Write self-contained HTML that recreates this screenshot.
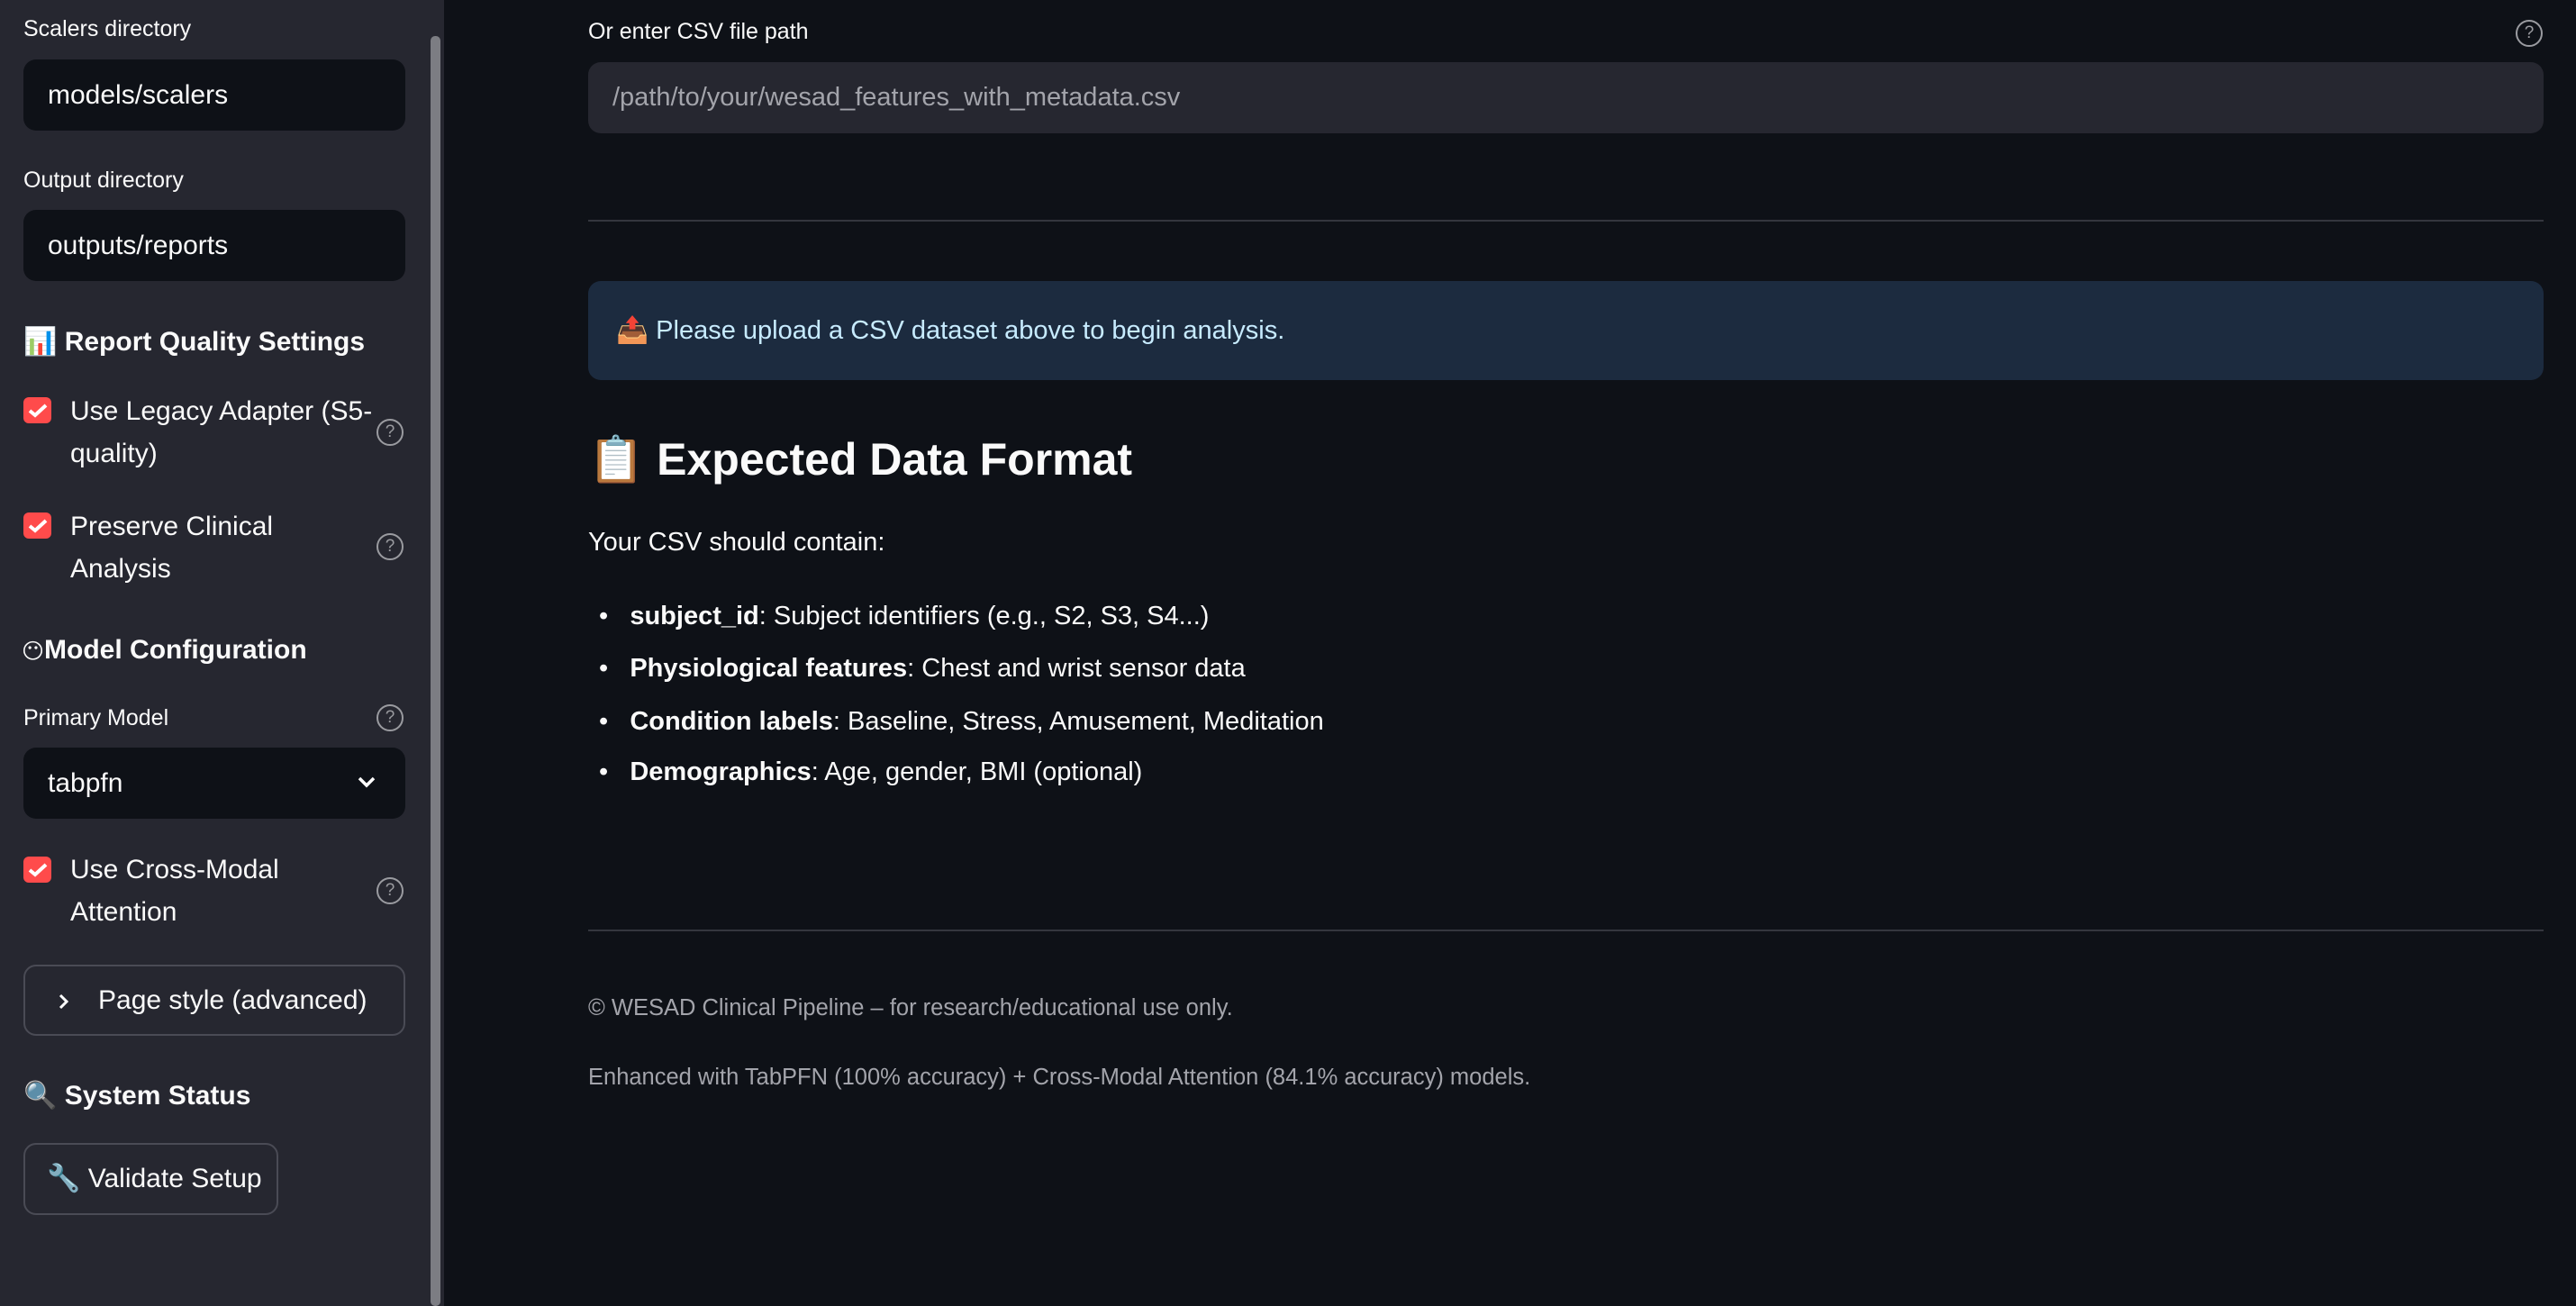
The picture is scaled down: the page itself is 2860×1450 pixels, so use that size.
<!DOCTYPE html>
<html><head><meta charset="utf-8"><style>
*{box-sizing:border-box;margin:0;padding:0}
body{width:2860px;height:1450px;background:#0e1117;font-family:"Liberation Sans","DejaVu Sans",sans-serif;color:#fafafa;position:relative;overflow:hidden}
.a{position:absolute;white-space:nowrap}
#sb{position:absolute;left:0;top:0;width:493px;height:1450px;background:#262730}
.sbar{position:absolute;left:478px;top:40px;width:11px;height:1410px;background:#7c7d83;border-radius:5px}
.lbl{font-size:25px;color:#fafafa}
.inp{position:absolute;left:26px;width:424px;height:79px;background:#0e1117;border-radius:14px;font-size:30px;padding-left:27px;line-height:79px}
.h3{font-size:30px;font-weight:bold}
.cb{position:absolute;left:26px;width:31px;height:29px;background:#ff4b4b;border-radius:6px}
.cb svg{position:absolute;left:5px;top:6px}
.ct{font-size:30px;line-height:47px}
.help{position:absolute;width:30px;height:30px;border:2px solid #9a9ba0;border-radius:50%;color:#9a9ba0;font-size:19px;text-align:center;line-height:26px}
.btn{position:absolute;border:2px solid #4a4b55;border-radius:14px;font-size:30px;line-height:75px}
.mt{font-size:29px}
</style></head><body>
<div id="sb">
<div class="sbar"></div>
<div class="a lbl" style="left:26px;top:18px">Scalers directory</div>
<div class="inp" style="top:66px">models/scalers</div>
<div class="a lbl" style="left:26px;top:186px">Output directory</div>
<div class="inp" style="top:233px">outputs/reports</div>
<div class="a h3" style="left:26px;top:362px">📊 Report Quality Settings</div>
<div class="cb" style="top:441px"><svg width="22" height="17" viewBox="0 0 22 17"><path d="M2 9l6 5L20 3" stroke="#fff" stroke-width="4" fill="none"/></svg></div>
<div class="a ct" style="left:78px;top:433px">Use Legacy Adapter (S5-<br>quality)</div>
<div class="help" style="left:418px;top:465px">?</div>
<div class="cb" style="top:569px"><svg width="22" height="17" viewBox="0 0 22 17"><path d="M2 9l6 5L20 3" stroke="#fff" stroke-width="4" fill="none"/></svg></div>
<div class="a ct" style="left:78px;top:561px">Preserve Clinical<br>Analysis</div>
<div class="help" style="left:418px;top:592px">?</div>
<div class="a h3" style="left:24px;top:705px"><span style="font-size:24px">😶</span>Model Configuration</div>
<div class="a lbl" style="left:26px;top:783px">Primary Model</div>
<div class="help" style="left:418px;top:782px">?</div>
<div class="inp" style="top:830px">tabpfn<svg style="position:absolute;left:370px;top:30px" width="22" height="16" viewBox="0 0 22 16"><path d="M3 4l8 8 8-8" stroke="#fff" stroke-width="3.5" fill="none"/></svg></div>
<div class="cb" style="top:951px"><svg width="22" height="17" viewBox="0 0 22 17"><path d="M2 9l6 5L20 3" stroke="#fff" stroke-width="4" fill="none"/></svg></div>
<div class="a ct" style="left:78px;top:942px">Use Cross-Modal<br>Attention</div>
<div class="help" style="left:418px;top:974px">?</div>
<div class="btn" style="left:26px;top:1071px;width:424px;height:79px"><svg style="position:absolute;left:36px;top:29px" width="14" height="20" viewBox="0 0 14 20"><path d="M3 3l7 7-7 7" stroke="#fff" stroke-width="3" fill="none"/></svg><span style="position:absolute;left:81px">Page style (advanced)</span></div>
<div class="a h3" style="left:26px;top:1199px">🔍 System Status</div>
<div class="btn" style="left:26px;top:1269px;width:283px;height:80px;padding-left:24px">🔧 Validate Setup</div>
</div>

<div class="a" style="left:653px;top:21px;font-size:25px">Or enter CSV file path</div>
<div class="help" style="left:2793px;top:22px">?</div>
<div class="a" style="left:653px;top:69px;width:2171px;height:79px;background:#262730;border-radius:14px;font-size:29px;color:#a3a4ab;padding-left:27px;line-height:79px">/path/to/your/wesad_features_with_metadata.csv</div>
<div class="a" style="left:653px;top:244px;width:2171px;height:2px;background:#34363e"></div>
<div class="a" style="left:653px;top:312px;width:2171px;height:110px;background:#1c2b3f;border-radius:14px;font-size:29px;color:#c7ebff;padding-left:31px;line-height:110px">📤 Please upload a CSV dataset above to begin analysis.</div>
<div class="a" style="left:653px;top:481px;font-size:50px;font-weight:bold">📋 Expected Data Format</div>
<div class="a mt" style="left:653px;top:586px">Your CSV should contain:</div>
<div class="a mt" style="left:665px;top:668px">•&nbsp;&nbsp;&nbsp;<b>subject_id</b>: Subject identifiers (e.g., S2, S3, S4...)</div>
<div class="a mt" style="left:665px;top:726px">•&nbsp;&nbsp;&nbsp;<b>Physiological features</b>: Chest and wrist sensor data</div>
<div class="a mt" style="left:665px;top:785px">•&nbsp;&nbsp;&nbsp;<b>Condition labels</b>: Baseline, Stress, Amusement, Meditation</div>
<div class="a mt" style="left:665px;top:841px">•&nbsp;&nbsp;&nbsp;<b>Demographics</b>: Age, gender, BMI (optional)</div>
<div class="a" style="left:653px;top:1032px;width:2171px;height:2px;background:#34363e"></div>
<div class="a" style="left:653px;top:1105px;font-size:25.5px;color:#a3a4ab">© WESAD Clinical Pipeline – for research/educational use only.</div>
<div class="a" style="left:653px;top:1182px;font-size:25.5px;color:#a3a4ab">Enhanced with TabPFN (100% accuracy) + Cross-Modal Attention (84.1% accuracy) models.</div>
</body></html>
